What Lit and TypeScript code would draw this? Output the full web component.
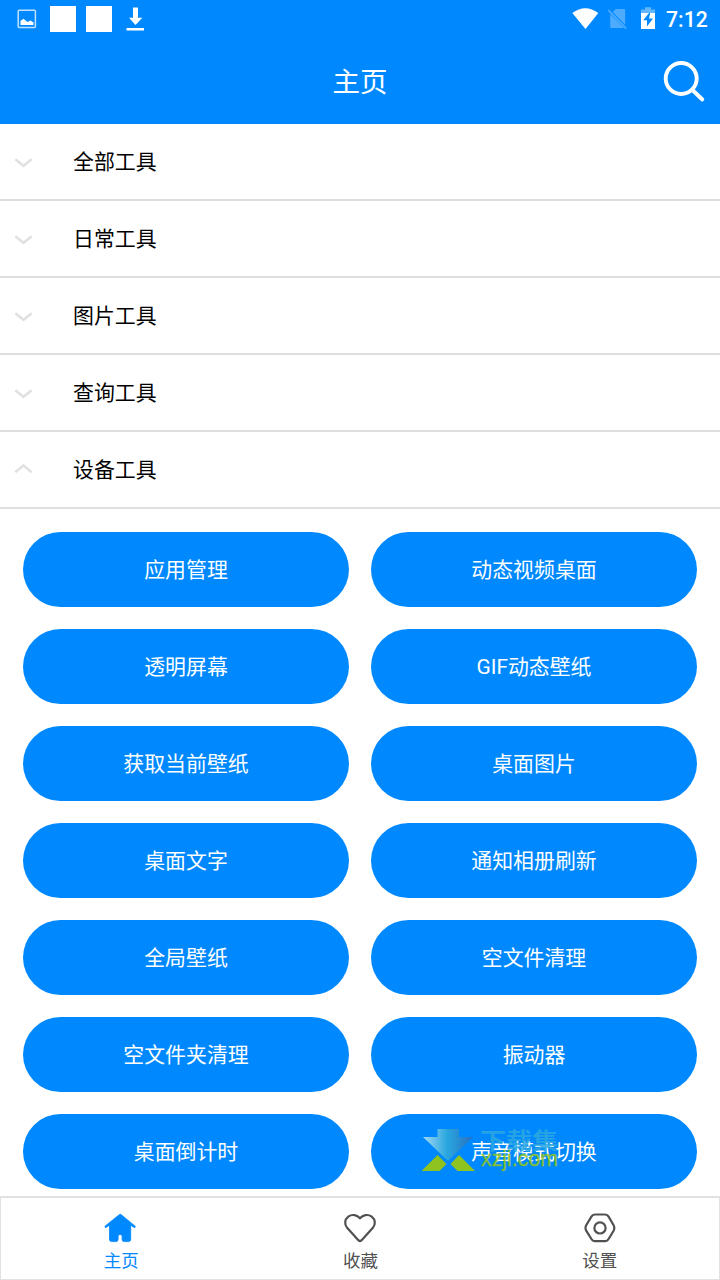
import { LitElement, html, css, svg } from "lit";
import { customElement, state } from "lit/decorators.js";
import { classMap } from "lit/directives/class-map.js";

const groups = ["全部工具", "日常工具", "图片工具", "查询工具", "设备工具"];
const tools = [
  "应用管理", "动态视频桌面", "透明屏幕", "GIF动态壁纸", "获取当前壁纸", "桌面图片", "桌面文字",
  "通知相册刷新", "全局壁纸", "空文件清理", "空文件夹清理", "振动器", "桌面倒计时", "声音模式切换",
];

const tabs = [
  {
    label: "主页",
    icon: svg`<path fill="currentColor" stroke="currentColor" stroke-width=".8" stroke-linejoin="round" d="M15.4 2.6 Q16.2 2 17 2.6 L31.2 14.2 Q31.6 15.7 30.2 15.5 L26.7 13.2 V27.3 Q26.7 29.6 24.5 29.6 H20.3 Q18.1 29.6 18.1 27.5 V24.2 Q18.1 22.4 16.1 22.4 Q14.1 22.4 14.1 24.2 V27.5 Q14.1 29.6 11.9 29.6 H7.7 Q5.5 29.6 5.5 27.3 V13.2 L2 15.5 Q.6 15.7 1 14.2 Z"/>`,
  },
  {
    label: "收藏",
    icon: svg`<path fill="none" stroke="currentColor" stroke-width="2.2" stroke-linejoin="round" d="M17 6.3 C14.2 3 9.2 1.7 5.3 4.6 C1.5 7.5 1.3 12.5 4.1 15.7 L15.6 28.4 Q17 29.6 18.4 28.4 L29.9 15.7 C32.7 12.5 32.5 7.5 28.7 4.6 C24.8 1.7 19.8 3 17 6.3 Z"/>`,
  },
  {
    label: "设置",
    icon: svg`<path fill="none" stroke="currentColor" stroke-width="2.2" d="M12.8 2.5 H23.2 Q25.4 2.5 26.6 4.6 L31.6 13.3 Q33 16 31.6 18.7 L26.6 27 Q25.4 29.1 23.2 29.1 H12.8 Q10.6 29.1 9.4 27 L4.2 18.7 Q2.8 16 4.2 13.3 L9.4 4.6 Q10.6 2.5 12.8 2.5 Z"/><circle cx="18" cy="15.9" r="5.6" fill="none" stroke="currentColor" stroke-width="2.2"/>`,
  },
];

@customElement("app-root")
export class AppRoot extends LitElement {
  @state() private open = 4;
  @state() private tab = 0;

  static styles = css`
    :host {
      display: flex;
      flex-direction: column;
      height: 1280px;
      overflow: hidden;
      background: #fff;
      color: #000;
      font-family: Roboto, "Noto Sans CJK SC", sans-serif;
      font-size: 20.9px;
    }
    * { box-sizing: border-box; }
    svg { display: block; flex: none; }
    .status {
      flex: none;
      height: 38px;
      display: flex;
      justify-content: space-between;
      background: #0089ff;
      color: #fff;
    }
    .clock { font-weight: 500; font-size: 21.2px; line-height: 40px; width: 54px; height: 38px; }
    .right { display: flex; }
    .bar {
      flex: none;
      height: 86px;
      display: grid;
      grid-template-columns: 60px 1fr 60px;
      background: #0089ff;
      color: #fff;
    }
    .title { grid-column: 2; text-align: center; font-size: 27.5px; line-height: 90px; height: 86px; }
    .group {
      flex: none;
      height: 77px;
      border-bottom: 2px solid #dedede;
      display: flex;
      align-items: center;
      gap: 37px;
      padding-left: 11px;
    }
    .group svg { fill: none; stroke: #e1e1e1; stroke-width: 2.6; }
    .name { line-height: 32px; height: 31px; }
    .content {
      flex: 1;
      min-height: 0;
      overflow: hidden;
      display: grid;
      grid-template-columns: 326px 326px;
      grid-auto-rows: 75px;
      gap: 22px;
      padding: 23px 23px 0;
    }
    .tool {
      position: relative;
      border-radius: 38px;
      background: #0089ff;
      color: #fff;
      text-align: center;
      line-height: 77px;
    }
    .watermark { position: absolute; left: 50px; top: 13px; overflow: visible; }
    .mark-cn { font: 700 23px "Noto Sans CJK SC", sans-serif; }
    .mark-en { font: 22px "Liberation Sans", sans-serif; }
    .tabs {
      flex: none;
      height: 84px;
      display: grid;
      grid-template-columns: repeat(3, 1fr);
      border: 1px solid #e2e2e2;
      border-top-width: 2px;
      background: #fff;
      color: #515151;
    }
    .tab {
      display: flex;
      flex-direction: column;
      align-items: center;
      padding-top: 14px;
      font-size: 17.5px;
      line-height: 26px;
      gap: 4px;
    }
    .tab span { padding-left: 1px; }
    .active { color: #0089ff; }
  `;

  private statusBar() {
    return html`<div class="status">
      <svg width="160" height="38" fill="#fff">
        <rect x="18.2" y="10.2" width="17.2" height="17.2" rx="1" fill="none" stroke="#fff" stroke-width="1.5" opacity=".75"/>
        <path d="M20.5 25 V21 L23.5 18.7 L27.5 22 L30.5 20.5 L33.5 22.5 V25Z"/>
        <path d="M50 6h26v26H50zM86 6h26v26H86z"/>
        <path d="M133 7.5h5v10.3h4.3L135.5 25L129 17.8h4zM126.5 28h17.5v2.6h-17.5z"/>
      </svg>
      <div class="right">
        <svg width="100" height="38" fill="#fff">
          <path d="M6.3 13 Q19.3 3.5 32.3 13 L19.5 29Z"/>
          <g fill="#4dacff"><path d="M49.8 9 H58 Q59.2 9 59.2 10.2 V24.7 L46.8 12ZM44.2 14 L58 28 H45.4 Q44.2 28 44.2 26.8Z"/><path d="M42.3 10.2L60.4 28.7" stroke="#4dacff" stroke-width="1.7"/></g>
          <path opacity=".38" d="M75 13V9.5h4V7.2h6v2.3h4V13z"/>
          <path fill-rule="evenodd" d="M75 13h8l-5.8 7.3h3.8v6.2l6-8h-4l1.2-5.5H89v16H75z"/>
        </svg>
        <div class="clock">7:12</div>
      </div>
    </div>`;
  }

  private watermark() {
    return html`<svg class="watermark" width="144" height="50" viewBox="0 0 144 50">
      <defs>
        <linearGradient id="arrow"><stop offset="0" stop-color="#a4d8f2"/><stop offset=".48" stop-color="#29a7df"/><stop offset="1" stop-color="#286fc0"/></linearGradient>
      </defs>
      <path fill="url(#arrow)" d="M16.5 2H38V10H52L27 34L2 10H16.5Z"/>
      <path fill="#8fc31f" d="M16.5 28L25.5 37L18.5 44H.5ZM38 28L54 44H36.5L29.5 37Z"/>
      <text class="mark-cn" x="59" y="22.3" textLength="78" lengthAdjust="spacingAndGlyphs" fill="#2ca8df" fill-opacity=".85">下载集</text>
      <text class="mark-en" x="60" y="39" textLength="77" lengthAdjust="spacingAndGlyphs" fill="#8fc31f" fill-opacity=".88" stroke="#8fc31f" stroke-width=".4" stroke-opacity=".8">xzji.com</text>
    </svg>`;
  }

  render() {
    return html`
      ${this.statusBar()}
      <div class="bar">
        <div class="title">主页</div>
        <svg width="60" height="86" fill="none" stroke="#fff" stroke-width="3.9" stroke-linecap="round">
          <circle cx="21.2" cy="40.5" r="15.5"/><path d="M32.5 52L42.3 61.5"/>
        </svg>
      </div>
      ${groups.map((name, i) => html`<div class="group" @click=${() => (this.open = i)}>
        <svg width="25" height="20" viewBox="0 0 25 20"><path d=${i === this.open ? "M4.3 12.2L12.5 5.5L20.7 12.2" : "M4.3 7.2L12.5 13.8L20.7 7.2"}/></svg>
        <span class="name">${name}</span>
      </div>`)}
      <div class="content">
        ${tools.map((name, i) => html`<div class="tool">${name}${i === 13 ? this.watermark() : ""}</div>`)}
      </div>
      <div class="tabs">
        ${tabs.map((t, i) => html`<div class=${classMap({ tab: true, active: i === this.tab })} @click=${() => (this.tab = i)}>
          <svg width="34" height="32" viewBox="0 0 34 32">${t.icon}</svg>
          <span>${t.label}</span>
        </div>`)}
      </div>`;
  }
}
